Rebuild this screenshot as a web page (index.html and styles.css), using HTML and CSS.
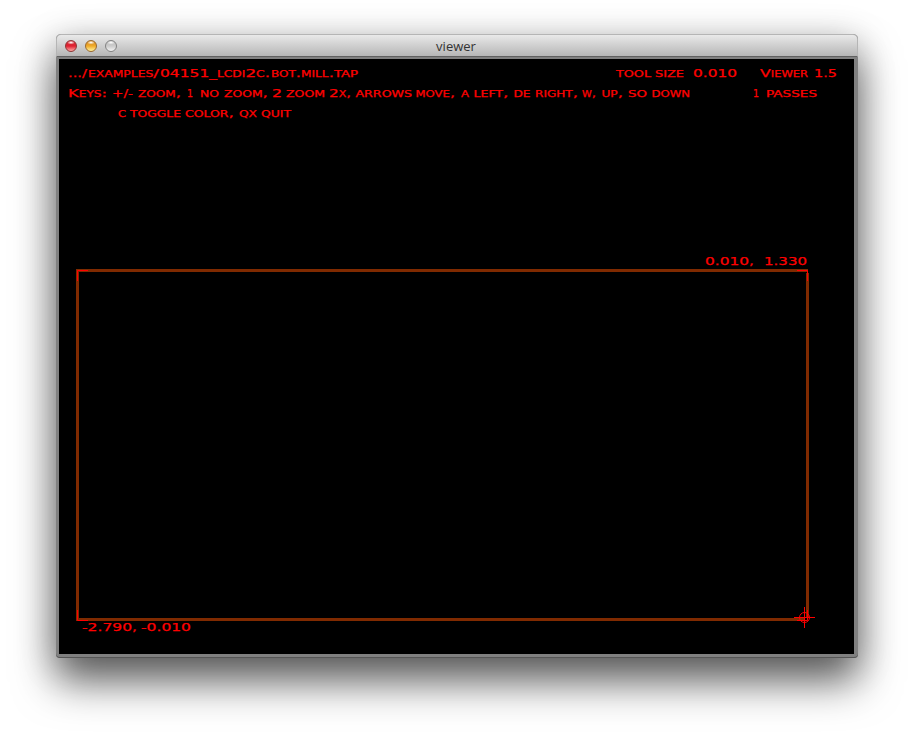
FILE: index.html
```html
<!DOCTYPE html>
<html lang="en">
<head>
<meta charset="utf-8">
<title>viewer</title>
<link rel="stylesheet" href="styles.css">
</head>
<body>
<main class="window">
  <header class="titlebar">
    <div class="lights"><i class="light red"></i><i class="light amber"></i><i class="light clear"></i></div>
    <h1 class="title">viewer</h1>
  </header>
  <svg class="canvas" viewBox="59 59 795 595" width="795" height="595">
    <g id="labels" class="labels"></g>
    <g class="tool-path">
      <path d="M76 270.5H808M77.5 269V621M76 619.5H804M807.5 273V618"/>
    </g>
    <g class="marks">
      <path d="M88 270.5H77.5V281M797 270.5H807.5V281M77.5 610V620.5H88M807.5 610V620.5H797"/>
      <path d="M794 617.5H815M804.5 607V628"/>
      <circle cx="804.5" cy="617.5" r="5"/>
    </g>
  </svg>
</main>
<script src="labels.js"></script>
</body>
</html>
```

FILE: styles.css
```css
body {
  margin: 0;
  width: 914px;
  height: 736px;
  overflow: hidden;
  background: #fff;
}

.window {
  box-sizing: border-box;
  width: 802px;
  height: 624px;
  margin: 34px 0 0 56px;
  padding: 1px;
  display: flex;
  flex-direction: column;
  border-radius: 5px 5px 4px 4px;
  background: #808080;
  box-shadow: 0 24px 42px rgba(0, 0, 0, 0.58), 0 6px 36px rgba(0, 0, 0, 0.22), inset 0 -1px 0 #555;
}

.titlebar {
  box-sizing: border-box;
  height: 23px;
  margin: -1px -1px 0;
  flex: none;
  display: grid;
  grid-template-columns: 70px 1fr 72px;
  align-items: center;
  border: 1px solid #b5b5b5;
  border-bottom-color: #606060;
  border-radius: 5px 5px 0 0;
  background: linear-gradient(#e9e9e9, #b6b6b6);
}

.lights {
  display: flex;
  gap: 8px;
  padding: 1px 0 0 8px;
}

.light {
  box-sizing: border-box;
  width: 12px;
  height: 12px;
  border: 1px solid #777;
  border-radius: 50%;
}

.red { border-color: #8d3434; background: radial-gradient(ellipse 4px 2px at 50% 15%, #fff, transparent), linear-gradient(#d92c37 15%, #e01f30 50%, #ffaaa5); }
.amber { border-color: #98672c; background: radial-gradient(ellipse 4px 2px at 50% 15%, #fff, transparent), linear-gradient(#dd9428 15%, #f0aa28 50%, #fff5a0); }
.clear { border-color: #828282; background: radial-gradient(ellipse 4px 2px at 50% 15%, #fff, transparent), linear-gradient(#c2c2c2 15%, #cbcbcb 50%, #f4f4f4); }

.title {
  margin: 0;
  padding-top: 1px;
  text-align: center;
  font: 13px/20px "Open Sans", sans-serif;
  color: #333;
}

.canvas {
  display: block;
  flex: none;
  margin: 2px 0 0 2px;
  background: #000;
}

.labels {
  fill: #f00;
  stroke: #f00;
  stroke-width: 0.25;
  font: 11px "DejaVu Sans", sans-serif;
  font-variant: small-caps;
}

.tool-path path {
  fill: none;
  stroke: #802a00;
  stroke-width: 3;
  shape-rendering: crispEdges;
}

.marks path,
.marks circle {
  fill: none;
  stroke: #f00;
  stroke-width: 1;
}
```

FILE: labels.js
```js
// Each word is [text, left, right] on a shared baseline.
const rows = [
  [77, [[".../", 68, 87], ["examples/", 88, 159], ["04151_", 160, 217], ["lcdi2c.", 217, 270], ["bot.", 271, 301], ["mill.", 301, 334], ["tap", 334, 358],
    ["tool", 616, 651], ["size", 655, 684], ["0.010", 693, 737], ["Viewer", 760, 808], ["1.5", 814, 837]]],
  [97, [["Keys:", 68, 107], ["+/-", 112, 133], ["zoom,", 138, 181], ["1", 187, 193], ["no", 200, 219], ["zoom,", 224, 268],
    ["2", 272, 282], ["zoom", 286, 325], ["2x,", 329, 351], ["arrows", 355.5, 412], ["move,", 415.5, 455], ["a", 461, 469],
    ["left,", 473.5, 508.5], ["de", 513.5, 530.5], ["right,", 535, 578], ["w,", 582, 596], ["up,", 601.5, 623], ["so", 628, 647],
    ["down", 651.5, 690], ["1", 753, 759], ["passes", 766, 817]]],
  [117, [["c", 118, 126], ["toggle", 130, 181], ["color,", 185, 234], ["qx", 239, 257], ["quit", 261, 291]]],
  [265, [["0.010,", 705, 754], ["1.330", 764, 807]]],
  [631, [["-2.790,", 82, 137], ["-0.010", 141, 191]]]
];

const group = document.getElementById("labels");
for (const [baseline, words] of rows) {
  for (const [word, left, right] of words) {
    const text = document.createElementNS("http://www.w3.org/2000/svg", "text");
    text.setAttribute("x", left);
    text.setAttribute("y", baseline);
    text.setAttribute("textLength", right - left);
    text.setAttribute("lengthAdjust", "spacingAndGlyphs");
    text.textContent = word;
    group.append(text);
  }
}
```
